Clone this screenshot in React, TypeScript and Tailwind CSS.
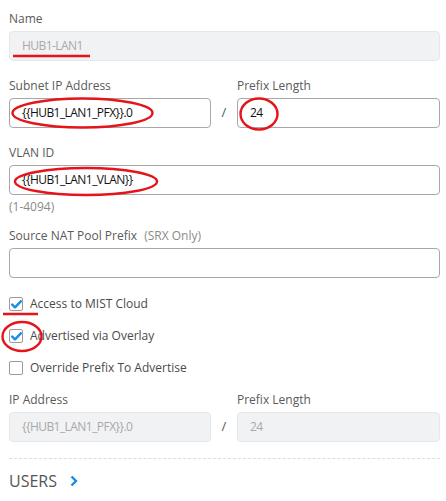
import React from "react";

const font = { fontFamily: '"Open Sans", "Noto Sans", sans-serif' };

function Label({ children }: { children: React.ReactNode }) {
  return <div className="text-[12px] leading-[17px] text-[#5a5a5a] mb-[4px]">{children}</div>;
}

function Input({ value, disabled }: { value?: string; disabled?: boolean }) {
  return (
    <div
      className={
        "h-[30px] rounded-[4px] border flex items-center pl-[12px] text-[12px] tracking-[-0.55px] " +
        (disabled
          ? "bg-[#f1f2f4] border-[#e6e7ea] text-[#a9a9a9]"
          : "bg-white border-[#a8a8a8] text-[#111]")
      }
    >
      {value}
    </div>
  );
}

function Check({ checked, label }: { checked: boolean; label: string }) {
  return (
    <div className="h-[20px] flex items-center">
      <div className="w-[14px] h-[14px] border border-[#9a9a9a] rounded-[2px] bg-white flex items-center justify-center">
        {checked && (
          <svg width="11" height="9" viewBox="0 0 11 9">
            <path d="M1.2 4.6 L4 7.3 L9.8 1.3" fill="none" stroke="#1d8fe0" strokeWidth="2.5" strokeLinecap="round" strokeLinejoin="round" />
          </svg>
        )}
      </div>
      <span className="ml-[7px] text-[12px] text-[#4a4a4a]">{label}</span>
    </div>
  );
}

export default function App() {
  return (
    <div className="relative w-[446px] h-[501px] bg-white overflow-hidden" style={font}>
      <div className="pl-[9px] pr-[6px] pt-[10px]">
        <Label>Name</Label>
        <Input value="HUB1-LAN1" disabled />

        <div className="flex mt-[16px]">
          <div className="w-[202px]">
            <Label>Subnet IP Address</Label>
            <Input value="{{HUB1_LAN1_PFX}}.0" />
          </div>
          <div className="w-[26px] flex items-end justify-center pb-[6px] text-[13px] text-[#555]">/</div>
          <div className="flex-1">
            <Label>Prefix Length</Label>
            <Input value="24" />
          </div>
        </div>

        <div className="mt-[16px]">
          <Label>VLAN ID</Label>
          <Input value="{{HUB1_LAN1_VLAN}}" />
          <div className="text-[12px] leading-[17px] text-[#8a8a8a] mt-[3px]">(1-4094)</div>
        </div>

        <div className="mt-[12px]">
          <Label>
            Source NAT Pool Prefix <span className="ml-[4px] text-[#8a8a8a]">(SRX Only)</span>
          </Label>
          <Input />
        </div>

        <div className="mt-[16px] flex flex-col gap-[12px]">
          <Check checked label="Access to MIST Cloud" />
          <Check checked label="Advertised via Overlay" />
          <Check checked={false} label="Override Prefix To Advertise" />
        </div>

        <div className="flex mt-[13px]">
          <div className="w-[202px]">
            <Label>IP Address</Label>
            <Input value="{{HUB1_LAN1_PFX}}.0" disabled />
          </div>
          <div className="w-[26px] flex items-end justify-center pb-[6px] text-[13px] text-[#555]">/</div>
          <div className="flex-1">
            <Label>Prefix Length</Label>
            <Input value="24" disabled />
          </div>
        </div>

        <div className="mt-[16px] border-t border-dashed border-[#dcdcdc]" />
        <div className="mt-[11px] flex items-center h-[22px]">
          <span className="text-[16px] text-[#555]">USERS</span>
          <svg className="ml-[13px]" width="8" height="12" viewBox="0 0 8 12">
            <path d="M1.5 1.5 L6 6 L1.5 10.5" fill="none" stroke="#1a8be3" strokeWidth="2.4" />
          </svg>
        </div>
      </div>

      <svg className="absolute left-0 top-0 pointer-events-none" width="446" height="501">
        <g fill="none" stroke="#e5131a" strokeWidth="2.4">
          <line x1="13" y1="56" x2="90" y2="56" />
          <ellipse cx="82.5" cy="113" rx="70" ry="14.5" />
          <ellipse cx="259" cy="114" rx="18.5" ry="15.5" />
          <ellipse cx="86" cy="181.5" rx="71" ry="13.5" />
          <line x1="3" y1="314" x2="38" y2="314" />
          <ellipse cx="22" cy="336.5" rx="19.5" ry="14.5" />
        </g>
      </svg>
    </div>
  );
}
